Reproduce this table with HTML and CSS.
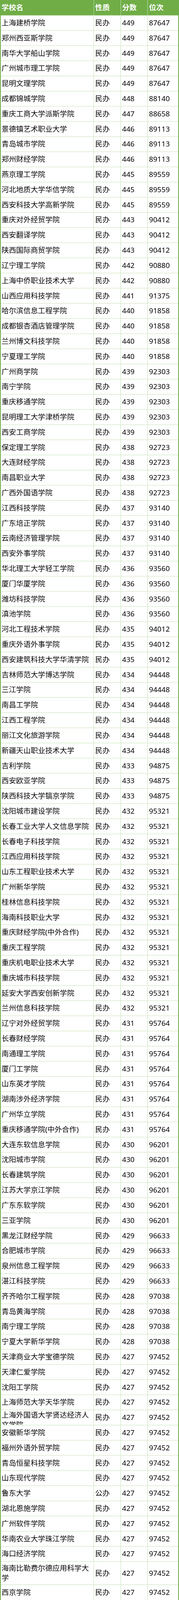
FILE: index.html
```html
<!DOCTYPE html>
<html lang="zh-CN">
<head>
<meta charset="utf-8">
<title>院校分数位次</title>
<link rel="stylesheet" href="styles.css">
</head>
<body>
<div class="table">
  <div class="row head"><div class="c">学校名</div><div class="c">性质</div><div class="c">分数</div><div class="c">位次</div></div>
  <div class="row"><div class="c">上海建桥学院</div><div class="c">民办</div><div class="c">449</div><div class="c">87647</div></div>
  <div class="row"><div class="c">郑州西亚斯学院</div><div class="c">民办</div><div class="c">449</div><div class="c">87647</div></div>
  <div class="row"><div class="c">南华大学船山学院</div><div class="c">民办</div><div class="c">449</div><div class="c">87647</div></div>
  <div class="row"><div class="c">广州城市理工学院</div><div class="c">民办</div><div class="c">449</div><div class="c">87647</div></div>
  <div class="row"><div class="c">昆明文理学院</div><div class="c">民办</div><div class="c">449</div><div class="c">87647</div></div>
  <div class="row"><div class="c">成都锦城学院</div><div class="c">民办</div><div class="c">448</div><div class="c">88140</div></div>
  <div class="row"><div class="c">重庆工商大学派斯学院</div><div class="c">民办</div><div class="c">447</div><div class="c">88658</div></div>
  <div class="row"><div class="c">景德镇艺术职业大学</div><div class="c">民办</div><div class="c">446</div><div class="c">89113</div></div>
  <div class="row"><div class="c">青岛城市学院</div><div class="c">民办</div><div class="c">446</div><div class="c">89113</div></div>
  <div class="row"><div class="c">郑州财经学院</div><div class="c">民办</div><div class="c">446</div><div class="c">89113</div></div>
  <div class="row"><div class="c">燕京理工学院</div><div class="c">民办</div><div class="c">445</div><div class="c">89559</div></div>
  <div class="row"><div class="c">河北地质大学华信学院</div><div class="c">民办</div><div class="c">445</div><div class="c">89559</div></div>
  <div class="row"><div class="c">西安科技大学高新学院</div><div class="c">民办</div><div class="c">445</div><div class="c">89559</div></div>
  <div class="row"><div class="c">重庆对外经贸学院</div><div class="c">民办</div><div class="c">443</div><div class="c">90412</div></div>
  <div class="row"><div class="c">西安翻译学院</div><div class="c">民办</div><div class="c">443</div><div class="c">90412</div></div>
  <div class="row"><div class="c">陕西国际商贸学院</div><div class="c">民办</div><div class="c">443</div><div class="c">90412</div></div>
  <div class="row"><div class="c">辽宁理工学院</div><div class="c">民办</div><div class="c">442</div><div class="c">90880</div></div>
  <div class="row"><div class="c">上海中侨职业技术大学</div><div class="c">民办</div><div class="c">442</div><div class="c">90880</div></div>
  <div class="row"><div class="c">山西应用科技学院</div><div class="c">民办</div><div class="c">441</div><div class="c">91375</div></div>
  <div class="row"><div class="c">哈尔滨信息工程学院</div><div class="c">民办</div><div class="c">440</div><div class="c">91858</div></div>
  <div class="row"><div class="c">成都银杏酒店管理学院</div><div class="c">民办</div><div class="c">440</div><div class="c">91858</div></div>
  <div class="row"><div class="c">兰州博文科技学院</div><div class="c">民办</div><div class="c">440</div><div class="c">91858</div></div>
  <div class="row"><div class="c">宁夏理工学院</div><div class="c">民办</div><div class="c">440</div><div class="c">91858</div></div>
  <div class="row"><div class="c">广州商学院</div><div class="c">民办</div><div class="c">439</div><div class="c">92303</div></div>
  <div class="row"><div class="c">南宁学院</div><div class="c">民办</div><div class="c">439</div><div class="c">92303</div></div>
  <div class="row"><div class="c">重庆移通学院</div><div class="c">民办</div><div class="c">439</div><div class="c">92303</div></div>
  <div class="row"><div class="c">昆明理工大学津桥学院</div><div class="c">民办</div><div class="c">439</div><div class="c">92303</div></div>
  <div class="row"><div class="c">西安工商学院</div><div class="c">民办</div><div class="c">439</div><div class="c">92303</div></div>
  <div class="row"><div class="c">保定理工学院</div><div class="c">民办</div><div class="c">438</div><div class="c">92723</div></div>
  <div class="row"><div class="c">大连财经学院</div><div class="c">民办</div><div class="c">438</div><div class="c">92723</div></div>
  <div class="row"><div class="c">南昌职业大学</div><div class="c">民办</div><div class="c">438</div><div class="c">92723</div></div>
  <div class="row"><div class="c">广西外国语学院</div><div class="c">民办</div><div class="c">438</div><div class="c">92723</div></div>
  <div class="row"><div class="c">江西科技学院</div><div class="c">民办</div><div class="c">437</div><div class="c">93140</div></div>
  <div class="row"><div class="c">广东培正学院</div><div class="c">民办</div><div class="c">437</div><div class="c">93140</div></div>
  <div class="row"><div class="c">云南经济管理学院</div><div class="c">民办</div><div class="c">437</div><div class="c">93140</div></div>
  <div class="row"><div class="c">西安外事学院</div><div class="c">民办</div><div class="c">437</div><div class="c">93140</div></div>
  <div class="row"><div class="c">华北理工大学轻工学院</div><div class="c">民办</div><div class="c">436</div><div class="c">93560</div></div>
  <div class="row"><div class="c">厦门华厦学院</div><div class="c">民办</div><div class="c">436</div><div class="c">93560</div></div>
  <div class="row"><div class="c">潍坊科技学院</div><div class="c">民办</div><div class="c">436</div><div class="c">93560</div></div>
  <div class="row"><div class="c">滇池学院</div><div class="c">民办</div><div class="c">436</div><div class="c">93560</div></div>
  <div class="row"><div class="c">河北工程技术学院</div><div class="c">民办</div><div class="c">435</div><div class="c">94012</div></div>
  <div class="row"><div class="c">重庆外语外事学院</div><div class="c">民办</div><div class="c">435</div><div class="c">94012</div></div>
  <div class="row"><div class="c">西安建筑科技大学华清学院</div><div class="c">民办</div><div class="c">435</div><div class="c">94012</div></div>
  <div class="row"><div class="c">吉林师范大学博达学院</div><div class="c">民办</div><div class="c">434</div><div class="c">94448</div></div>
  <div class="row"><div class="c">三江学院</div><div class="c">民办</div><div class="c">434</div><div class="c">94448</div></div>
  <div class="row"><div class="c">南昌工学院</div><div class="c">民办</div><div class="c">434</div><div class="c">94448</div></div>
  <div class="row"><div class="c">江西工程学院</div><div class="c">民办</div><div class="c">434</div><div class="c">94448</div></div>
  <div class="row"><div class="c">丽江文化旅游学院</div><div class="c">民办</div><div class="c">434</div><div class="c">94448</div></div>
  <div class="row"><div class="c">新疆天山职业技术大学</div><div class="c">民办</div><div class="c">434</div><div class="c">94448</div></div>
  <div class="row"><div class="c">吉利学院</div><div class="c">民办</div><div class="c">433</div><div class="c">94875</div></div>
  <div class="row"><div class="c">西安欧亚学院</div><div class="c">民办</div><div class="c">433</div><div class="c">94875</div></div>
  <div class="row"><div class="c">陕西科技大学镐京学院</div><div class="c">民办</div><div class="c">433</div><div class="c">94875</div></div>
  <div class="row"><div class="c">沈阳城市建设学院</div><div class="c">民办</div><div class="c">432</div><div class="c">95321</div></div>
  <div class="row"><div class="c">长春工业大学人文信息学院</div><div class="c">民办</div><div class="c">432</div><div class="c">95321</div></div>
  <div class="row"><div class="c">长春电子科技学院</div><div class="c">民办</div><div class="c">432</div><div class="c">95321</div></div>
  <div class="row"><div class="c">江西应用科技学院</div><div class="c">民办</div><div class="c">432</div><div class="c">95321</div></div>
  <div class="row"><div class="c">山东工程职业技术大学</div><div class="c">民办</div><div class="c">432</div><div class="c">95321</div></div>
  <div class="row"><div class="c">广州新华学院</div><div class="c">民办</div><div class="c">432</div><div class="c">95321</div></div>
  <div class="row"><div class="c">桂林信息科技学院</div><div class="c">民办</div><div class="c">432</div><div class="c">95321</div></div>
  <div class="row"><div class="c">海南科技职业大学</div><div class="c">民办</div><div class="c">432</div><div class="c">95321</div></div>
  <div class="row"><div class="c">重庆财经学院(中外合作)</div><div class="c">民办</div><div class="c">432</div><div class="c">95321</div></div>
  <div class="row"><div class="c">重庆工程学院</div><div class="c">民办</div><div class="c">432</div><div class="c">95321</div></div>
  <div class="row"><div class="c">重庆机电职业技术大学</div><div class="c">民办</div><div class="c">432</div><div class="c">95321</div></div>
  <div class="row"><div class="c">重庆城市科技学院</div><div class="c">民办</div><div class="c">432</div><div class="c">95321</div></div>
  <div class="row"><div class="c">延安大学西安创新学院</div><div class="c">民办</div><div class="c">432</div><div class="c">95321</div></div>
  <div class="row"><div class="c">兰州信息科技学院</div><div class="c">民办</div><div class="c">432</div><div class="c">95321</div></div>
  <div class="row"><div class="c">辽宁对外经贸学院</div><div class="c">民办</div><div class="c">431</div><div class="c">95764</div></div>
  <div class="row"><div class="c">长春财经学院</div><div class="c">民办</div><div class="c">431</div><div class="c">95764</div></div>
  <div class="row"><div class="c">南通理工学院</div><div class="c">民办</div><div class="c">431</div><div class="c">95764</div></div>
  <div class="row"><div class="c">厦门工学院</div><div class="c">民办</div><div class="c">431</div><div class="c">95764</div></div>
  <div class="row"><div class="c">山东英才学院</div><div class="c">民办</div><div class="c">431</div><div class="c">95764</div></div>
  <div class="row"><div class="c">湖南涉外经济学院</div><div class="c">民办</div><div class="c">431</div><div class="c">95764</div></div>
  <div class="row"><div class="c">广州华立学院</div><div class="c">民办</div><div class="c">431</div><div class="c">95764</div></div>
  <div class="row"><div class="c">重庆移通学院(中外合作)</div><div class="c">民办</div><div class="c">431</div><div class="c">95764</div></div>
  <div class="row"><div class="c">大连东软信息学院</div><div class="c">民办</div><div class="c">430</div><div class="c">96201</div></div>
  <div class="row"><div class="c">沈阳城市学院</div><div class="c">民办</div><div class="c">430</div><div class="c">96201</div></div>
  <div class="row"><div class="c">长春建筑学院</div><div class="c">民办</div><div class="c">430</div><div class="c">96201</div></div>
  <div class="row"><div class="c">江苏大学京江学院</div><div class="c">民办</div><div class="c">430</div><div class="c">96201</div></div>
  <div class="row"><div class="c">广东东软学院</div><div class="c">民办</div><div class="c">430</div><div class="c">96201</div></div>
  <div class="row"><div class="c">三亚学院</div><div class="c">民办</div><div class="c">430</div><div class="c">96201</div></div>
  <div class="row"><div class="c">黑龙江财经学院</div><div class="c">民办</div><div class="c">429</div><div class="c">96633</div></div>
  <div class="row"><div class="c">合肥城市学院</div><div class="c">民办</div><div class="c">429</div><div class="c">96633</div></div>
  <div class="row"><div class="c">泉州信息工程学院</div><div class="c">民办</div><div class="c">429</div><div class="c">96633</div></div>
  <div class="row"><div class="c">湛江科技学院</div><div class="c">民办</div><div class="c">429</div><div class="c">96633</div></div>
  <div class="row"><div class="c">齐齐哈尔工程学院</div><div class="c">民办</div><div class="c">428</div><div class="c">97038</div></div>
  <div class="row"><div class="c">青岛黄海学院</div><div class="c">民办</div><div class="c">428</div><div class="c">97038</div></div>
  <div class="row"><div class="c">南宁理工学院</div><div class="c">民办</div><div class="c">428</div><div class="c">97038</div></div>
  <div class="row"><div class="c">宁夏大学新华学院</div><div class="c">民办</div><div class="c">428</div><div class="c">97038</div></div>
  <div class="row"><div class="c">天津商业大学宝德学院</div><div class="c">民办</div><div class="c">427</div><div class="c">97452</div></div>
  <div class="row"><div class="c">天津仁爱学院</div><div class="c">民办</div><div class="c">427</div><div class="c">97452</div></div>
  <div class="row"><div class="c">沈阳工学院</div><div class="c">民办</div><div class="c">427</div><div class="c">97452</div></div>
  <div class="row"><div class="c">上海师范大学天华学院</div><div class="c">民办</div><div class="c">427</div><div class="c">97452</div></div>
  <div class="row"><div class="c clip"><span>上海外国语大学贤达经济人文学院</span></div><div class="c">民办</div><div class="c">427</div><div class="c">97452</div></div>
  <div class="row"><div class="c">安徽新华学院</div><div class="c">民办</div><div class="c">427</div><div class="c">97452</div></div>
  <div class="row"><div class="c">福州外语外贸学院</div><div class="c">民办</div><div class="c">427</div><div class="c">97452</div></div>
  <div class="row"><div class="c">青岛恒星科技学院</div><div class="c">民办</div><div class="c">427</div><div class="c">97452</div></div>
  <div class="row"><div class="c">山东现代学院</div><div class="c">民办</div><div class="c">427</div><div class="c">97452</div></div>
  <div class="row"><div class="c">鲁东大学</div><div class="c">公办</div><div class="c">427</div><div class="c">97452</div></div>
  <div class="row"><div class="c">湖北恩施学院</div><div class="c">民办</div><div class="c">427</div><div class="c">97452</div></div>
  <div class="row"><div class="c">广州软件学院</div><div class="c">民办</div><div class="c">427</div><div class="c">97452</div></div>
  <div class="row"><div class="c">华南农业大学珠江学院</div><div class="c">民办</div><div class="c">427</div><div class="c">97452</div></div>
  <div class="row"><div class="c">海口经济学院</div><div class="c">民办</div><div class="c">427</div><div class="c">97452</div></div>
  <div class="row tall"><div class="c"><span>海南比勒费尔德应用科学大学</span></div><div class="c">民办</div><div class="c">427</div><div class="c">97452</div></div>
  <div class="row last"><div class="c">西京学院</div><div class="c">民办</div><div class="c">427</div><div class="c">97452</div></div>
</div>
</body>
</html>
```

FILE: styles.css
```css
html, body {
  margin: 0;
  padding: 0;
  background: #ffffff;
}

/* The viewport is 4096px tall while the picture is 4222px tall,
   so the table is laid out at full size and squeezed to fit. */
.table {
  width: 459px;
  box-sizing: border-box;
  border-left: 2px solid #70ad47;
  border-right: 2px solid #70ad47;
  border-bottom: 1px solid #70ad47;
  font-family: "Noto Sans", "Noto Sans CJK SC", sans-serif;
  font-size: 18.67px;
  line-height: 25px;
  color: #000000;
  transform: scaleY(0.97016);
  transform-origin: 0 0;
}

.row {
  display: grid;
  grid-template-columns: 239px 69px 69px 78px;
  grid-template-rows: 100%;
  height: 40px;
}

.row.head {
  height: 41px;
  background: #70ad47;
  color: #ffffff;
  font-weight: bold;
}

.row.tall {
  height: 61px;
}

.c {
  box-sizing: border-box;
  display: flex;
  align-items: center;
  padding: 0 2px 2px 3px;
  border-right: 1px solid #c6e0b4;
  border-bottom: 1px solid #c6e0b4;
  white-space: nowrap;
  overflow: hidden;
}

.c:first-child {
  padding-left: 2px;
}

.c:last-child {
  border-right: none;
}

.row.last .c {
  border-bottom: none;
}

.row.head .c {
  padding-bottom: 1px;
}

.row.tall .c span,
.c.clip span {
  white-space: normal;
}

.c.clip {
  align-items: flex-start;
  padding-top: 0;
  padding-bottom: 0;
}
```
